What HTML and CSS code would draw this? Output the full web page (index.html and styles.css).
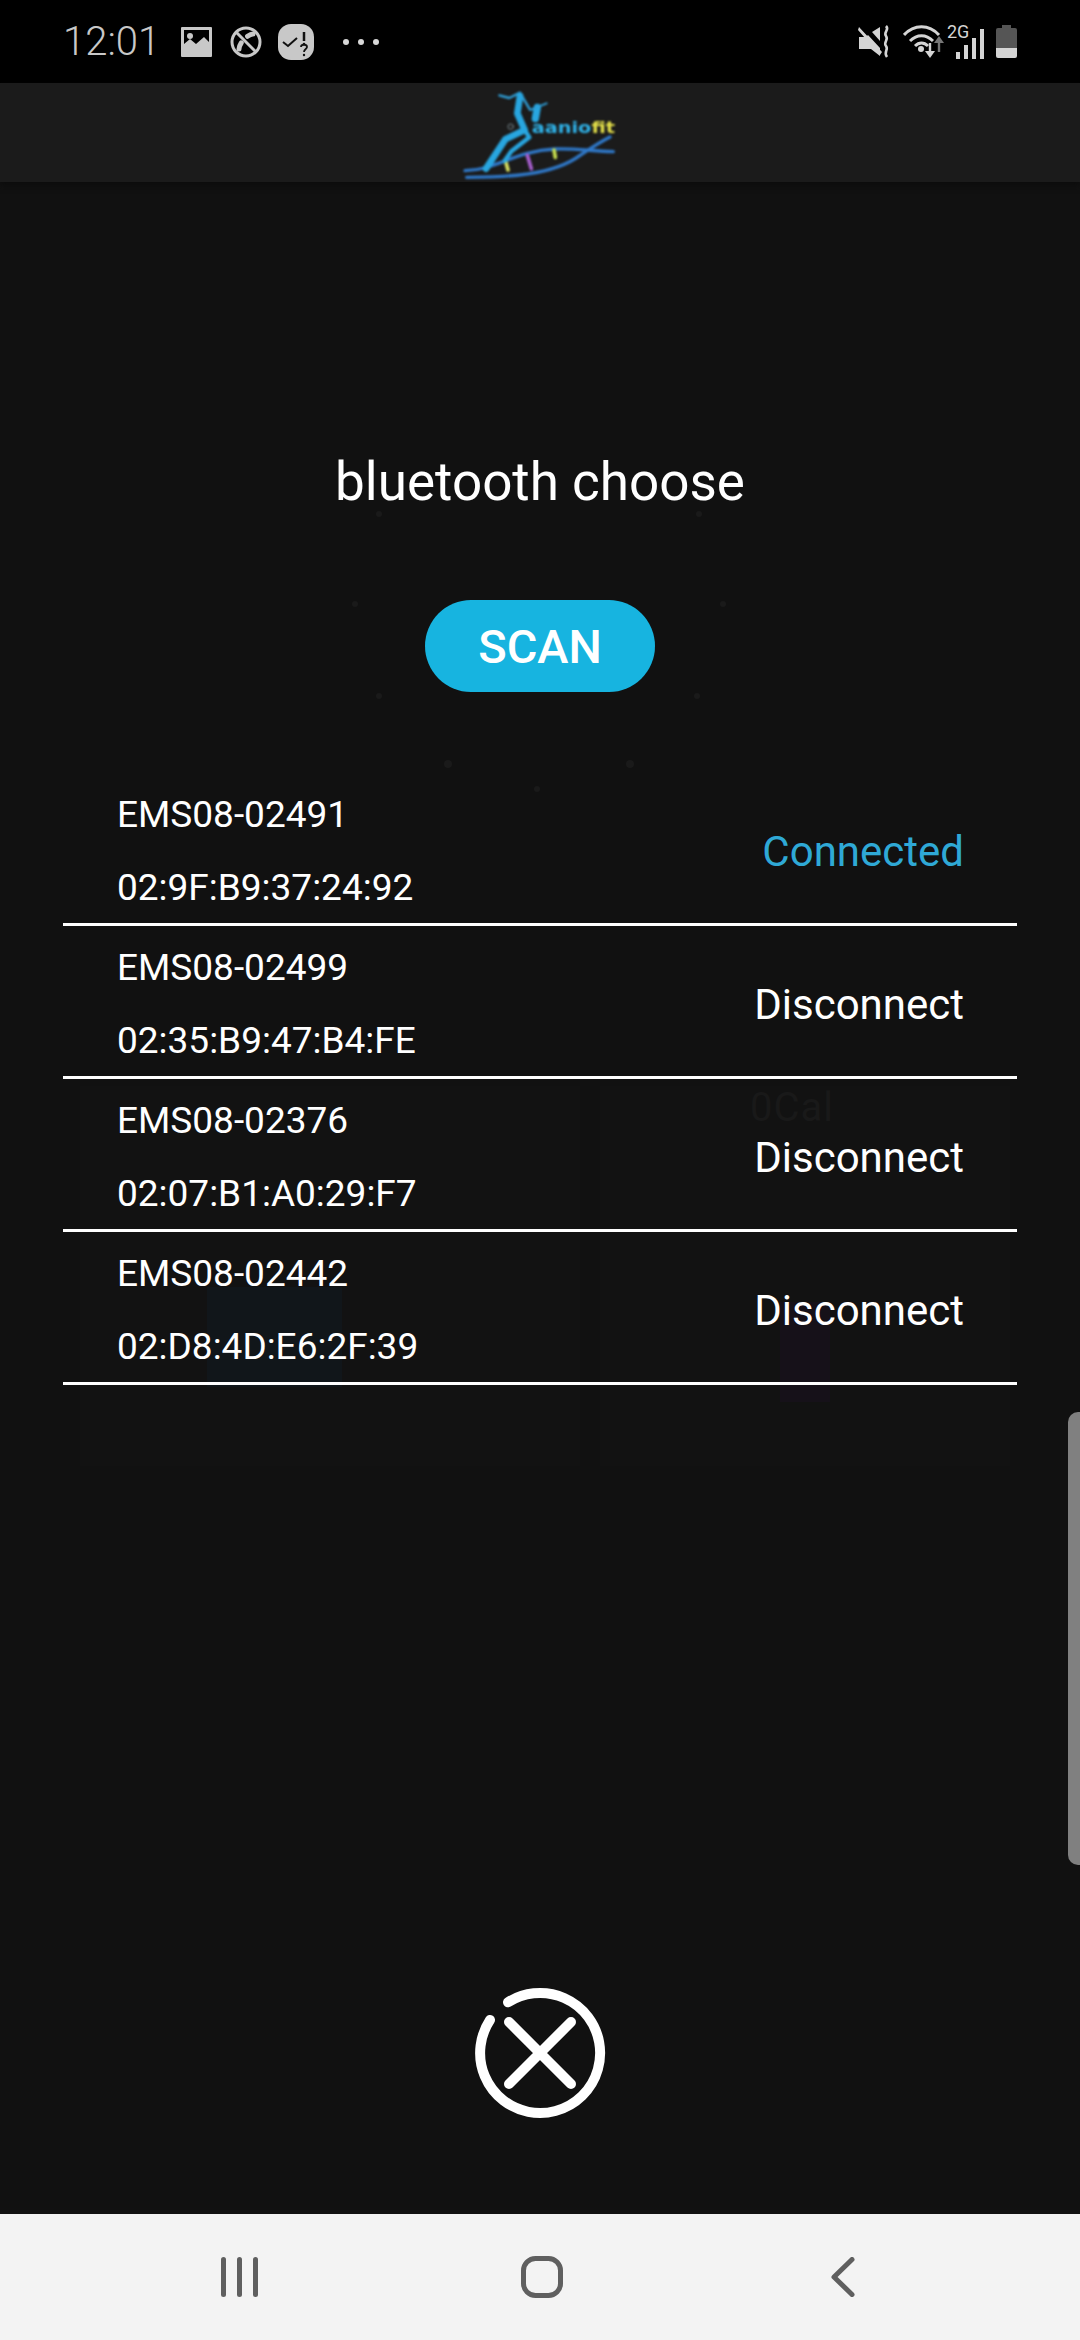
FILE: index.html
```html
<!DOCTYPE html>
<html lang="en">

<head>
    <meta charset="UTF-8">
    <meta name="viewport" content="width=device-width, initial-scale=1.0">
    <title>bluetooth choose</title>
    <link rel="stylesheet" href="styles.css">
</head>

<body>
    <div class="status-bar">
        <div class="status-left">
            <span class="time">12:01</span>

            <svg class="ic-image" width="31" height="30" viewBox="0 0 31 30">
                <path fill="#c8c8c8" fill-rule="evenodd" d="M1 0h29a1 1 0 0 1 1 1v28a1 1 0 0 1-1 1H1a1 1 0 0 1-1-1V1a1 1 0 0 1 1-1zM3 3v14l6-5 6 5 8-7 5 5V3z"/>
                <circle cx="9" cy="9" r="3" fill="#c8c8c8"/>
            </svg>

            <svg class="ic-call" width="32" height="32" viewBox="0 0 32 32" fill="none" stroke="#c8c8c8">
                <circle cx="16" cy="16" r="14" stroke-width="3"/>
                <path d="M6 6l20 20" stroke-width="3"/>
                <path d="M23 8c-5 0-14 9-14 15" stroke-width="5" stroke-linecap="round" stroke-dasharray="6 9 7 30"/>
            </svg>

            <div class="ic-badge">
                <svg width="36" height="36" viewBox="0 0 36 36">
                    <path fill="none" stroke="#111" stroke-width="2" d="M5 18l5 4 9-8"/>
                    <path fill="none" stroke="#111" stroke-width="2.5" d="M26 8v9"/>
                    <circle cx="26" cy="20" r="1.3" fill="#111"/>
                    <path fill="none" stroke="#111" stroke-width="1.8" d="M23 23c0-3 6-3 6 0 0 2-3 2-3 5"/>
                    <circle cx="26" cy="31" r="1.2" fill="#111"/>
                </svg>
            </div>

            <div class="dots"><i></i><i></i><i></i></div>
        </div>

        <div class="status-right">
            <svg width="33" height="34" viewBox="0 0 33 34">
                <path fill="#d4d4d4" d="M1 12h7l2-2 12 13v8l-9-7H1zM14 7l8-5v14zM1 2l23 25-2 3L0 5z"/>
                <path fill="none" stroke="#d4d4d4" stroke-width="2.6" d="M28 1c4 4-3 6 0 10s-3 6 0 10 -3 6 1 11"/>
            </svg>

            <svg class="ic-wifi" width="44" height="34" viewBox="0 0 44 34" fill="none">
                <path stroke="#d4d4d4" stroke-width="3" d="M1 10c10-11 25-11 35 0M7 16c7-7 16-7 23 0M12 21c4-4 9-4 13 0"/>
                <circle cx="18" cy="24" r="3" fill="#d4d4d4"/>
                <path stroke="#d4d4d4" stroke-width="2.4" d="M27 18v12"/>
                <path fill="#d4d4d4" d="M22 26h10l-5 7z"/>
                <path stroke="#777" stroke-width="2.4" d="M36 16v11"/>
                <path fill="#777" d="M31 18h10l-5-7z"/>
            </svg>

            <div class="signal">
                <span class="net">2G</span>
                <svg width="30" height="30" viewBox="0 0 30 30">
                    <rect x="1" y="23" width="4" height="7" fill="#d4d4d4"/>
                    <rect x="9" y="16" width="4" height="14" fill="#d4d4d4"/>
                    <rect x="17" y="9" width="4" height="21" fill="#d4d4d4"/>
                    <rect x="25" y="0" width="4" height="30" fill="#d4d4d4"/>
                </svg>
            </div>

            <div class="battery"><div class="battery-cap"></div><div class="battery-level"></div></div>
        </div>
    </div>

    <div class="app-header">
        <svg class="logo" width="160" height="94" viewBox="60 24 480 282" fill="none" stroke-linecap="round" stroke-linejoin="round">
            <!-- dna strand -->
            <path stroke="#2f78c8" stroke-width="10" d="M75 272c90 0 150-60 270-65 60-2 110 6 175 8"/>
            <path stroke="#2f78c8" stroke-width="10" d="M80 292c120 0 260-6 340-66 30-20 60-40 90-55"/>
            <path stroke="#c9e04f" stroke-width="11" d="M342 210l4 22"/>
            <path stroke="#a85fd0" stroke-width="11" d="M262 226l12 40"/>
            <path stroke="#d8e060" stroke-width="11" d="M198 248l6 22"/>
            <!-- runner -->
            <path stroke="#2f9fd8" stroke-width="7" d="M178 46l30 8 32-16 28 48"/>
            <path stroke="#28a6e0" stroke-width="20" d="M240 48l-8 52 22 50-58 28-58 88"/>
            <path stroke="#28a6e0" stroke-width="13" d="M254 150l14 22-54 42-20 28"/>
            <path stroke="#28a6e0" stroke-width="22" d="M292 82l-6 34"/>
            <path stroke="#2f9fd8" stroke-width="6" d="M270 90l50-20"/>
            <circle cx="212" cy="140" r="8" stroke="#7a8a90" stroke-width="3"/>
            <text class="logo-name" x="275" y="160" textLength="250" lengthAdjust="spacingAndGlyphs"><tspan fill="#2fb2e8">aanio</tspan><tspan fill="#e4e04a">fit</tspan></text>
        </svg>
    </div>

    <div class="main">
        <!-- what shows through the dim overlay -->
        <div class="ghost">
            <svg class="ghost-dots" width="1080" height="640" viewBox="0 0 1080 640" fill="#1a1a1a">
                <circle cx="379" cy="332" r="3"/>
                <circle cx="699" cy="332" r="3"/>
                <circle cx="355" cy="422" r="3"/>
                <circle cx="723" cy="422" r="3"/>
                <circle cx="379" cy="514" r="3"/>
                <circle cx="697" cy="514" r="3"/>
                <circle cx="448" cy="582" r="4"/>
                <circle cx="630" cy="582" r="4"/>
                <circle cx="537" cy="607" r="3"/>
            </svg>
            <div class="ghost-card ghost-card-left"></div>
            <div class="ghost-card ghost-card-right"></div>
            <div class="ghost-blue"></div>
            <div class="ghost-purple"></div>
            <span class="ghost-text">0Cal</span>
        </div>

        <div class="title">bluetooth choose</div>
        <button class="scan-btn">SCAN</button>

        <div class="device-list">
            <div class="device">
                <div class="device-info">
                    <div>EMS08-02491</div>
                    <div>02:9F:B9:37:24:92</div>
                </div>
                <div class="device-state connected">Connected</div>
            </div>
            <div class="device">
                <div class="device-info">
                    <div>EMS08-02499</div>
                    <div>02:35:B9:47:B4:FE</div>
                </div>
                <div class="device-state">Disconnect</div>
            </div>
            <div class="device">
                <div class="device-info">
                    <div>EMS08-02376</div>
                    <div>02:07:B1:A0:29:F7</div>
                </div>
                <div class="device-state">Disconnect</div>
            </div>
            <div class="device">
                <div class="device-info">
                    <div>EMS08-02442</div>
                    <div>02:D8:4D:E6:2F:39</div>
                </div>
                <div class="device-state">Disconnect</div>
            </div>
        </div>

        <svg class="close-btn" width="132" height="132" viewBox="0 0 132 132" fill="none" stroke="#fff" stroke-linecap="round">
            <path stroke-width="10" d="M34 15.3A60 60 0 1 1 16 33"/>
            <path stroke-width="10" d="M35 35l62 62M97 35l-62 62"/>
        </svg>

        <div class="scrollbar"></div>
    </div>

    <div class="nav-bar">
        <svg width="42" height="40" viewBox="0 0 42 40" fill="#5f5f5f">
            <rect x="2" y="0" width="5" height="40" rx="2.5"/>
            <rect x="18" y="0" width="5" height="40" rx="2.5"/>
            <rect x="34" y="0" width="5" height="40" rx="2.5"/>
        </svg>
        <svg class="nav-home" width="42" height="42" viewBox="0 0 42 42" fill="none" stroke="#5f5f5f" stroke-width="5">
            <rect x="2.5" y="2.5" width="37" height="37" rx="12"/>
        </svg>
        <svg width="24" height="40" viewBox="0 0 24 40" fill="none" stroke="#5f5f5f" stroke-width="5" stroke-linecap="round" stroke-linejoin="round">
            <path d="M21 2.5L3 20l18 17.5"/>
        </svg>
    </div>
</body>

</html>
```

FILE: styles.css
```css
* {
    box-sizing: border-box;
}

html,
body {
    margin: 0;
    padding: 0;
}

body {
    width: 1080px;
    height: 2340px;
    display: flex;
    flex-direction: column;
    overflow: hidden;
    background-color: #111;
    color: #fff;
    font-family: Roboto, "Liberation Sans", sans-serif;
}

/* status bar */
.status-bar {
    height: 83px;
    flex: none;
    display: flex;
    align-items: center;
    justify-content: space-between;
    background-color: #000;
    padding: 0 63px 0 63px;
}

.status-left,
.status-right {
    display: flex;
    align-items: center;
}

.time {
    width: 118px;
    font-size: 40px;
    font-weight: 300;
    color: #c8c8c8;
}

.ic-image {
    margin-right: 18px;
}

.ic-call {
    margin-right: 16px;
}

.ic-badge {
    width: 36px;
    height: 36px;
    margin-right: 29px;
    background-color: #c8c8c8;
    border-radius: 13px;
}

.ic-badge svg {
    display: block;
}

.dots {
    display: flex;
    gap: 9px;
}

.dots i {
    width: 6px;
    height: 6px;
    border-radius: 50%;
    background-color: #d8d8d8;
}

.status-right svg {
    display: block;
}

.ic-wifi {
    margin-left: 12px;
}

.signal {
    width: 38px;
    height: 34px;
    margin-left: 0;
    display: flex;
    justify-content: flex-end;
    align-items: flex-end;
    position: relative;
}

.net {
    position: absolute;
    left: 0;
    top: -2px;
    font-size: 18px;
    line-height: 18px;
    color: #d4d4d4;
}

.battery {
    width: 21px;
    height: 33px;
    margin-left: 11px;
    display: flex;
    flex-direction: column;
    align-items: center;
}

.battery-cap {
    width: 9px;
    height: 3px;
    background-color: #555;
}

.battery-level {
    width: 21px;
    flex: 1;
    border-radius: 2px;
    background: linear-gradient(#555 0 68%, #d4d4d4 68%);
}

/* app header */
.app-header {
    height: 99px;
    flex: none;
    display: flex;
    justify-content: center;
    align-items: flex-end;
    background-color: #1b1b1b;
    box-shadow: 0 3px 6px #0c0c0c;
    position: relative;
    z-index: 1;
}

.logo {
    filter: blur(0.8px);
}

.logo-name {
    font-family: "DejaVu Sans", sans-serif;
    font-size: 46px;
    font-weight: bold;
}

/* dialog */
.main {
    flex: 1;
    position: relative;
    display: flex;
    flex-direction: column;
    align-items: center;
    padding-top: 265px;
    padding-bottom: 95px;
}

.ghost-dots {
    position: absolute;
    left: 0;
    top: 0;
}

.ghost-card {
    position: absolute;
    top: 904px;
    height: 380px;
    background-color: #121212;
}

.ghost-card-left {
    left: 80px;
    width: 500px;
}

.ghost-card-right {
    left: 600px;
    width: 410px;
}

.ghost-blue {
    position: absolute;
    left: 207px;
    top: 1105px;
    width: 135px;
    height: 100px;
    background-color: #11161a;
}

.ghost-purple {
    position: absolute;
    left: 780px;
    top: 1120px;
    width: 50px;
    height: 100px;
    background-color: #161119;
}

.ghost-text {
    position: absolute;
    left: 750px;
    top: 911px;
    font-size: 40px;
    line-height: 30px;
    letter-spacing: 1px;
    color: #191919;
}

.title {
    font-size: 53px;
    line-height: 70px;
    position: relative;
}

.scan-btn {
    width: 230px;
    height: 92px;
    margin-top: 83px;
    padding-top: 2px;
    border: none;
    border-radius: 46px;
    background-color: #17b4e0;
    color: #fff;
    font-family: inherit;
    font-size: 47px;
    font-weight: 500;
    position: relative;
}

.device-list {
    width: 954px;
    margin-top: 81px;
    position: relative;
}

.device {
    height: 153px;
    display: flex;
    align-items: center;
    justify-content: space-between;
    padding: 6px 53px 0 54px;
    border-bottom: 3px solid #fff;
}

.device-info {
    font-size: 37px;
    line-height: 73px;
}

.device-state {
    font-size: 42px;
    line-height: 38px;
    padding-top: 1px;
}

.connected {
    color: #2fa9d6;
}

.close-btn {
    margin-top: auto;
    position: relative;
}

.scrollbar {
    position: absolute;
    right: 0;
    top: 1230px;
    width: 12px;
    height: 453px;
    background-color: #808080;
    border-radius: 10px 0 0 10px;
}

/* bottom nav */
.nav-bar {
    height: 126px;
    flex: none;
    background-color: #f3f3f3;
    position: relative;
    display: flex;
    align-items: center;
    justify-content: space-between;
    padding: 0 225px 0 219px;
}

.nav-home {
    margin-right: 8px;
}
```
